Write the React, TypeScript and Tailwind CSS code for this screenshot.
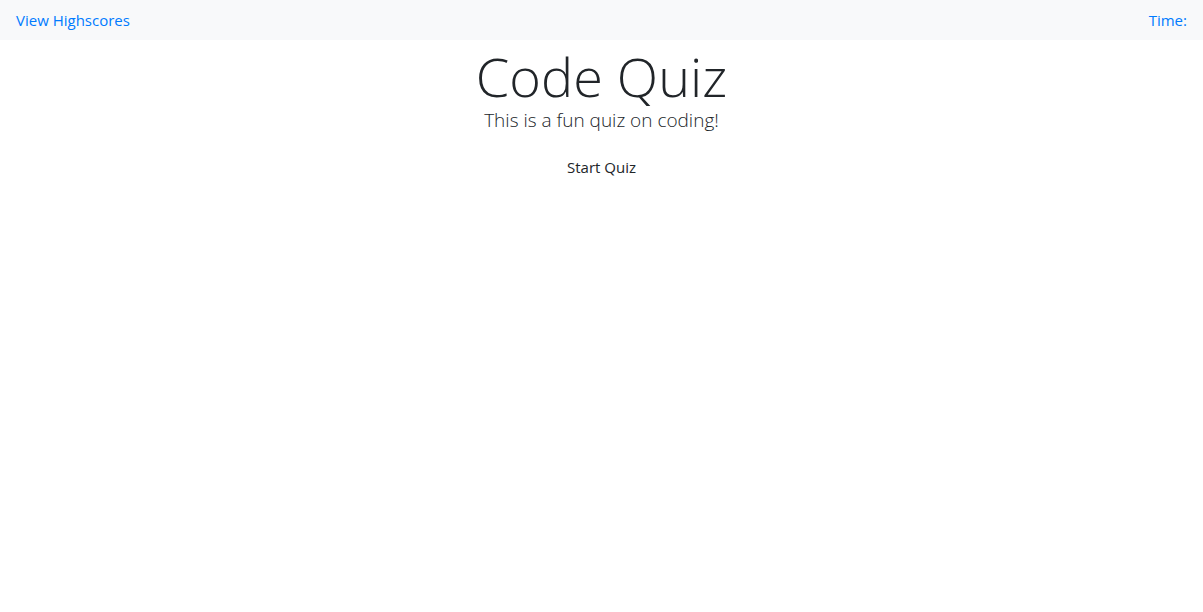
export default function App() {
    return (
        <div className="min-h-screen bg-white text-[#212529]" style={{ fontFamily: '"Open Sans", "Liberation Sans", sans-serif' }}>
            {/* Navbar */}
            <nav className="flex h-10 items-center justify-between bg-[#f8f9fa] px-4">
                <a href="#" className="text-[15px] leading-6 text-[#007bff]">
                    View Highscores
                </a>
                <span className="text-[15px] leading-6 text-[#007bff]">Time: </span>
            </nav>

            {/* Intro */}
            <div className="flex flex-col items-center text-center">
                <h1 className="mt-[7px] text-[54px] leading-[1.1] font-light">Code Quiz</h1>
                <p className="mt-[3px] text-[19px] leading-[1.2] font-light text-[#212529]">This is a fun quiz on coding!</p>
                <button className="mt-[17px] px-3 py-1.5 text-[15px] leading-6 text-[#212529]">Start Quiz</button>
            </div>
        </div>
    );
}
